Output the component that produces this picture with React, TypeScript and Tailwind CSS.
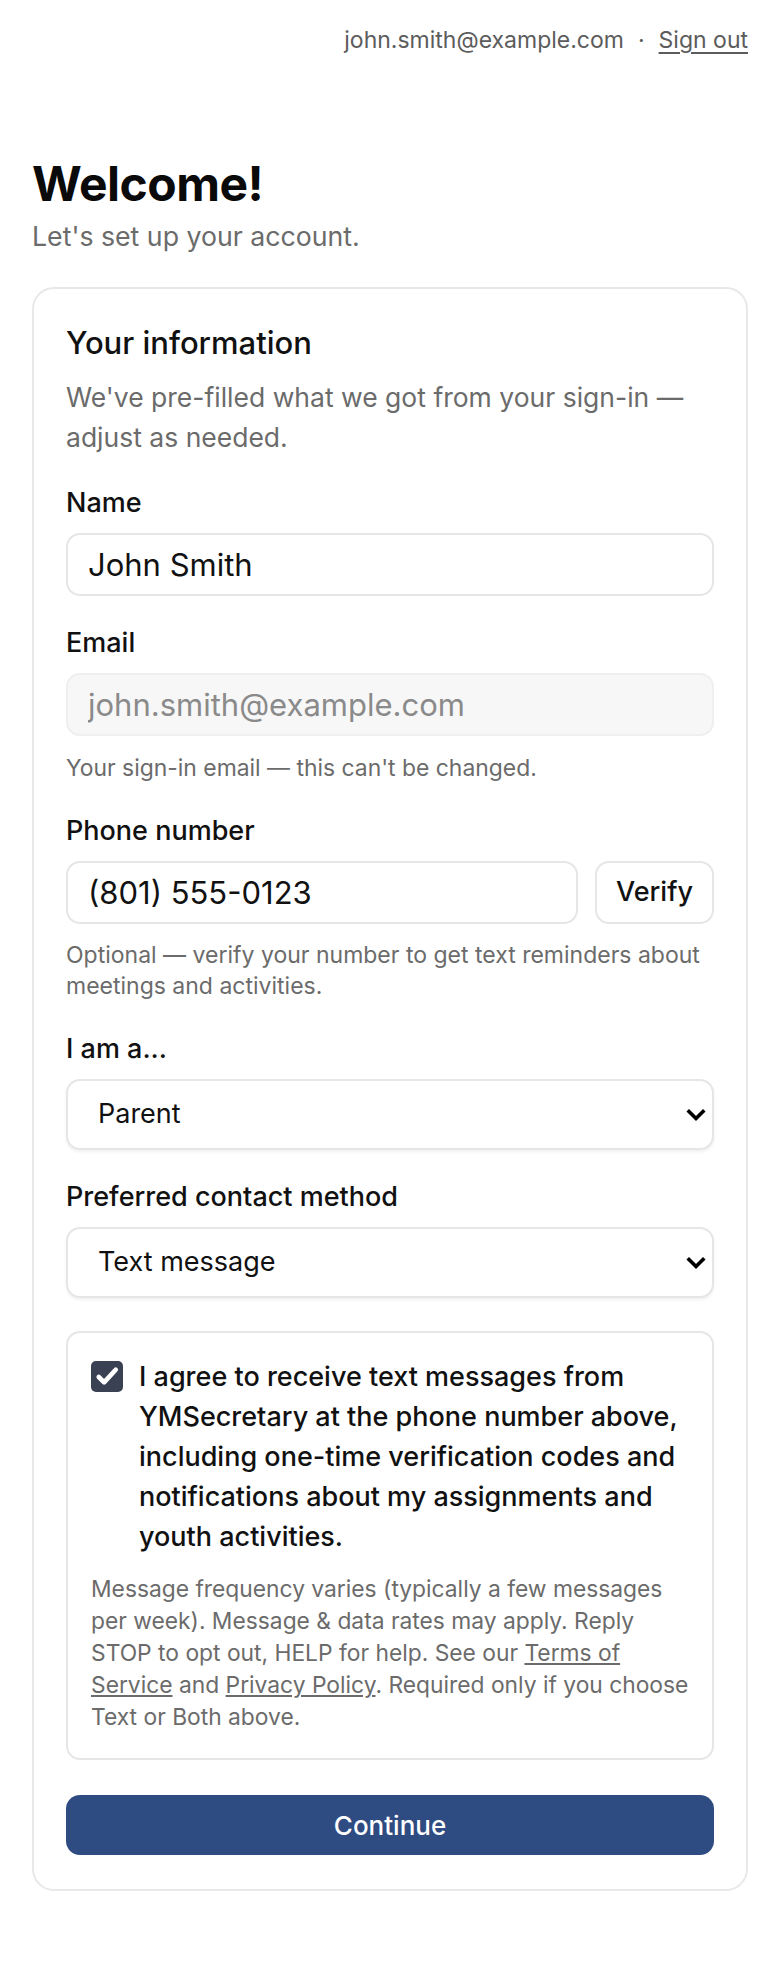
import { useState } from "react";

function Chevron() {
    return (
        <svg
            viewBox="0 0 20 13"
            className="pointer-events-none absolute right-[8px] top-1/2 h-[13px] w-[20px] -translate-y-1/2"
            fill="none"
            stroke="#000"
            strokeWidth={3.6}
            strokeLinecap="square"
        >
            <path d="M3 3 L10 10 L17 3" />
        </svg>
    );
}

function Field({ label, children }: { label: string; children: React.ReactNode }) {
    return (
        <div className="flex flex-col">
            <label className="mb-[15px] text-[27px] leading-[30px] font-medium text-[#111]">{label}</label>
            {children}
        </div>
    );
}

function Select({ value, options, onChange }: { value: string; options: string[]; onChange: (v: string) => void }) {
    return (
        <div className="relative">
            <select
                value={value}
                onChange={(e) => onChange(e.target.value)}
                className="h-[71px] w-full appearance-none rounded-[14px] border-2 border-[#e6e6e6] bg-white pl-[30px] pr-10 text-[27px] text-[#111] shadow-[0_2px_3px_rgba(0,0,0,0.06)] outline-none"
            >
                {options.map((o) => (
                    <option key={o}>{o}</option>
                ))}
            </select>
            <Chevron />
        </div>
    );
}

export default function App() {
    const [name, setName] = useState("John Smith");
    const [phone, setPhone] = useState("(801) 555-0123");
    const [role, setRole] = useState("Parent");
    const [method, setMethod] = useState("Text message");
    const [agreed, setAgreed] = useState(true);

    const inputClass =
        "h-[63px] w-full rounded-[14px] border-2 border-[#e6e6e6] bg-white px-[20px] text-[31px] text-[#111] outline-none";

    return (
        <div className="min-h-screen bg-white px-8 font-['Inter',sans-serif] text-[#111]">
            <header className="flex h-[80px] items-center justify-end gap-[14px] text-[23px] text-[#5c5c5c]">
                <span>john.smith@example.com</span>
                <span>·</span>
                <a href="#" className="underline underline-offset-[4px]">
                    Sign out
                </a>
            </header>

            <div className="mt-[76px]">
                <h1 className="text-[48px] leading-[56px] font-bold tracking-[-0.5px] text-[#0a0a0a]">Welcome!</h1>
                <p className="mt-[6px] text-[26.7px] leading-[36px] text-[#6b6b6b]">Let's set up your account.</p>
            </div>

            <div className="mt-[33px] rounded-[22px] border-2 border-[#e8e8e8] p-8 pb-[34px]">
                <h2 className="text-[31px] leading-[44px] font-medium">Your information</h2>
                <p className="mt-[12px] text-[26.5px] leading-[40px] text-[#6b6b6b]">
                    We've pre-filled what we got from your sign-in — adjust as needed.
                </p>

                <div className="mt-[31px] flex flex-col gap-[32px]">
                    <Field label="Name">
                        <input value={name} onChange={(e) => setName(e.target.value)} className={inputClass} />
                    </Field>

                    <Field label="Email">
                        <input
                            value="john.smith@example.com"
                            disabled
                            className="h-[63px] w-full rounded-[14px] border-2 border-[#efefef] bg-[#f7f7f7] px-[20px] text-[31px] text-[#8a8a8a] outline-none"
                        />
                        <p className="mt-[16px] text-[22.9px] leading-[32px] text-[#6b6b6b]">
                            Your sign-in email — this can't be changed.
                        </p>
                    </Field>

                    <Field label="Phone number">
                        <div className="flex gap-[17px]">
                            <input value={phone} onChange={(e) => setPhone(e.target.value)} className={inputClass} />
                            <button className="h-[63px] w-[119px] shrink-0 rounded-[14px] border-2 border-[#e6e6e6] bg-white text-[27px] font-medium text-[#111]">
                                Verify
                            </button>
                        </div>
                        <p className="mt-[16px] text-[23px] leading-[31px] text-[#6b6b6b]">
                            Optional — verify your number to get text reminders about meetings and activities.
                        </p>
                    </Field>

                    <Field label="I am a...">
                        <Select value={role} onChange={setRole} options={["Parent", "Youth", "Leader"]} />
                    </Field>

                    <Field label="Preferred contact method">
                        <Select value={method} onChange={setMethod} options={["Text message", "Email", "Both"]} />
                    </Field>

                    <div className="mt-[1px] rounded-[14px] border-2 border-[#e6e6e6] pt-[24px] pr-[19px] pb-[25px] pl-[23px]">
                        <label className="flex cursor-pointer gap-[16px]">
                            <span
                                role="checkbox"
                                aria-checked={agreed}
                                onClick={() => setAgreed(!agreed)}
                                className="mt-[4px] flex h-[31px] w-[32px] shrink-0 items-center justify-center rounded-[5px] bg-[#3a4152]"
                            >
                                {agreed && (
                                    <svg viewBox="0 0 32 32" className="h-[31px] w-[32px]" fill="none" stroke="#fff" strokeWidth={4.8} strokeLinecap="round" strokeLinejoin="round">
                                        <path d="M7.5 16.5 L13 22 L25 9" />
                                    </svg>
                                )}
                            </span>
                            <span className="pr-[4px] text-[27px] leading-[40px] font-medium text-[#111]">
                                I agree to receive text messages from YMSecretary at the phone number above, including one-time verification codes and notifications about my assignments and youth activities.
                            </span>
                        </label>
                        <p className="mt-[16px] text-[22.8px] leading-[32px] text-[#6b6b6b]">
                            Message frequency varies (typically a few messages per week). Message &amp; data rates may apply. Reply STOP to opt out, HELP for help. See our{" "}
                            <a href="#" className="underline underline-offset-[2px]">
                                Terms of Service
                            </a>{" "}
                            and{" "}
                            <a href="#" className="underline underline-offset-[2px]">
                                Privacy Policy
                            </a>
                            . Required only if you choose Text or Both above.
                        </p>
                    </div>
                </div>

                <button className="mt-[35px] h-[60px] w-full rounded-[14px] bg-[#2f4c82] text-[26px] font-medium text-white">
                    Continue
                </button>
            </div>
        </div>
    );
}
